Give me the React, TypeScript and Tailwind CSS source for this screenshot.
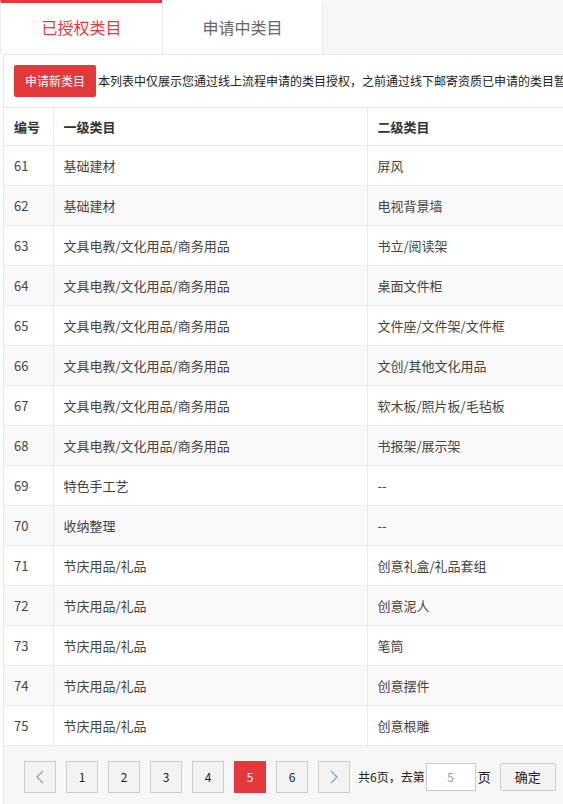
import React from "react";

const rows: [number, string, string][] = [
  [61, "基础建材", "屏风"],
  [62, "基础建材", "电视背景墙"],
  [63, "文具电教/文化用品/商务用品", "书立/阅读架"],
  [64, "文具电教/文化用品/商务用品", "桌面文件柜"],
  [65, "文具电教/文化用品/商务用品", "文件座/文件架/文件框"],
  [66, "文具电教/文化用品/商务用品", "文创/其他文化用品"],
  [67, "文具电教/文化用品/商务用品", "软木板/照片板/毛毡板"],
  [68, "文具电教/文化用品/商务用品", "书报架/展示架"],
  [69, "特色手工艺", "--"],
  [70, "收纳整理", "--"],
  [71, "节庆用品/礼品", "创意礼盒/礼品套组"],
  [72, "节庆用品/礼品", "创意泥人"],
  [73, "节庆用品/礼品", "笔筒"],
  [74, "节庆用品/礼品", "创意摆件"],
  [75, "节庆用品/礼品", "创意根雕"],
];

function Chevron({ dir }: { dir: "l" | "r" }) {
  return (
    <svg width="8" height="14" viewBox="0 0 8 14" fill="none">
      <path
        d={dir === "l" ? "M7 1 L1 7 L7 13" : "M1 1 L7 7 L1 13"}
        stroke="#8aa0b8"
        strokeWidth="1.2"
      />
    </svg>
  );
}

export default function App() {
  return (
    <div
      className="w-[563px] h-[804px] overflow-hidden bg-white text-[#333]"
      style={{ fontFamily: '"Noto Sans CJK SC", "Noto Sans", sans-serif' }}
    >
      {/* Tabs */}
      <div className="flex h-[54px] bg-[#f7f7f7]">
        <div className="w-[162px] shrink-0 bg-white border-l border-[#ececec] border-t-[3px] border-t-[#e4393c] pb-[3px] flex items-center justify-center text-[16px] text-[#e4393c]">
          已授权类目
        </div>
        <div className="w-[161px] shrink-0 bg-white border-l border-r border-[#ececec] border-t-[3px] border-t-white pb-[3px] flex items-center justify-center text-[16px] text-[#666]">
          申请中类目
        </div>
      </div>

      {/* Content */}
      <div className="ml-[3px] border-l border-t border-[#e8e8e8] w-[900px]">
        <div className="h-[52px] flex items-center pl-[10px]">
          <div className="w-[82px] h-[32px] shrink-0 bg-[#e4393c] rounded-[2px] text-white text-[12px] flex items-center justify-center">
            申请新类目
          </div>
          <div className="ml-[2px] text-[12px] text-[#222] whitespace-nowrap">
            本列表中仅展示您通过线上流程申请的类目授权，之前通过线下邮寄资质已申请的类目暂不在此列表中展示，如有疑问请联系运营人员
          </div>
        </div>

        <table className="border-collapse text-[13px] table-fixed w-[900px]">
          <colgroup>
            <col className="w-[49px]" />
            <col className="w-[314px]" />
            <col className="w-[314px]" />
            <col />
          </colgroup>
          <thead>
            <tr className="h-[38px] border-t border-b border-[#e8e8e8] bg-white">
              <th className="text-left font-semibold px-[10px] border-r border-[#ebebeb] text-[#333]">编号</th>
              <th className="text-left font-semibold px-[10px] border-r border-[#ebebeb] text-[#333]">一级类目</th>
              <th className="text-left font-semibold px-[10px] border-r border-[#ebebeb] text-[#333]">二级类目</th>
              <th className="text-left font-semibold px-[10px] text-[#333]">状态</th>
            </tr>
          </thead>
          <tbody>
            {rows.map(([n, a, b], i) => (
              <tr
                key={n}
                className={
                  "h-[40px] border-b border-[#ececec] " +
                  (i % 2 === 1 ? "bg-[#f9f9f9]" : "bg-white")
                }
              >
                <td className="px-[10px] border-r border-[#ebebeb] text-[#444]">{n}</td>
                <td className="px-[10px] border-r border-[#ebebeb] text-[#444]">{a}</td>
                <td className="px-[10px] border-r border-[#ebebeb] text-[#444]">{b}</td>
                <td className="px-[10px] text-[#444]">已授权</td>
              </tr>
            ))}
          </tbody>
        </table>

        {/* Pagination */}
        <div className="h-[60px] bg-[#f7f7f7] flex items-start pt-[15px] pl-[20px] text-[12px]">
          <div className="flex items-center gap-[10px]">
            <div className="w-[32px] h-[32px] border border-[#ccc] bg-[#f3f3f3] flex items-center justify-center">
              <Chevron dir="l" />
            </div>
            {[1, 2, 3, 4, 5, 6].map((p) =>
              p === 5 ? (
                <div
                  key={p}
                  className="w-[32px] h-[32px] bg-[#e4393c] text-white flex items-center justify-center"
                >
                  {p}
                </div>
              ) : (
                <div
                  key={p}
                  className="w-[32px] h-[32px] border border-[#ccc] bg-[#f3f3f3] text-[#222] flex items-center justify-center"
                >
                  {p}
                </div>
              )
            )}
            <div className="w-[32px] h-[32px] border border-[#ccc] bg-[#f3f3f3] flex items-center justify-center">
              <Chevron dir="r" />
            </div>
          </div>
          <div className="flex items-center h-[32px]">
            <span className="ml-[8px] text-[#222]">共6页，去第</span>
            <div className="ml-[1px] w-[50px] h-[28px] bg-white border border-[#ccc] flex items-center justify-center text-[#999]">
              5
            </div>
            <span className="ml-[2px] text-[#222] text-[13px]">页</span>
            <div className="ml-[9px] w-[56px] h-[28px] bg-[#f3f3f3] border border-[#ccc] rounded-[2px] flex items-center justify-center text-[#222] text-[13px]">
              确定
            </div>
          </div>
        </div>
      </div>
    </div>
  );
}
